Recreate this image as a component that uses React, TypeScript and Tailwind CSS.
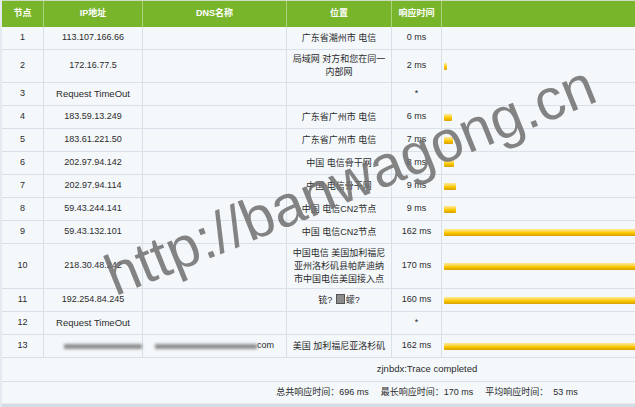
import React from 'react'

type Hop = {
  n: number
  ip: React.ReactNode
  dns?: React.ReactNode
  loc?: React.ReactNode
  ms: string
  bar?: number
  h: string
}

const Box = () => (
  <span className="inline-block w-[9px] h-[10px] mx-[1px] align-[-1px] bg-[#8c8c8c] border border-[#555]" />
)

const HOPS: Hop[] = [
  { n: 1, ip: '113.107.166.66', loc: '广东省潮州市 电信', ms: '0 ms', h: 'h-[23px]' },
  { n: 2, ip: '172.16.77.5', loc: <>局域网 对方和您在同一<br />内部网</>, ms: '2 ms', bar: 2, h: 'h-[33px]' },
  { n: 3, ip: <span className="text-[9.5px]">Request TimeOut</span>, ms: '*', h: 'h-[23px]' },
  { n: 4, ip: '183.59.13.249', loc: '广东省广州市 电信', ms: '6 ms', bar: 6, h: 'h-[23px]' },
  { n: 5, ip: '183.61.221.50', loc: '广东省广州市 电信', ms: '7 ms', bar: 7, h: 'h-[23px]' },
  { n: 6, ip: '202.97.94.142', loc: '中国 电信骨干网', ms: '8 ms', bar: 8, h: 'h-[23px]' },
  { n: 7, ip: '202.97.94.114', loc: '中国 电信骨干网', ms: '9 ms', bar: 9, h: 'h-[23px]' },
  { n: 8, ip: '59.43.244.141', loc: '中国 电信CN2节点', ms: '9 ms', bar: 9, h: 'h-[23px]' },
  { n: 9, ip: '59.43.132.101', loc: '中国 电信CN2节点', ms: '162 ms', bar: 162, h: 'h-[23px]' },
  {
    n: 10,
    ip: '218.30.48.242',
    loc: <>中国电信 美国加利福尼<br />亚州洛杉矶县帕萨迪纳<br />市中国电信美国接入点</>,
    ms: '170 ms',
    bar: 170,
    h: 'h-[45px]',
  },
  { n: 11, ip: '192.254.84.245', loc: <>铳? <Box />蠓?</>, ms: '160 ms', bar: 160, h: 'h-[23px]' },
  { n: 12, ip: <span className="text-[9.5px]">Request TimeOut</span>, ms: '*', h: 'h-[23px]' },
  {
    n: 13,
    ip: <div className="w-full flex justify-end"><div className="h-[5px] w-[78px] bg-[#8d8d8d] blur-[1.5px]" /></div>,
    dns: (
      <div className="w-full flex items-center pl-[12px]">
        <div className="h-[5px] w-[102px] bg-[#8d8d8d] blur-[1.5px]" />
        <span>com</span>
      </div>
    ),
    loc: '美国 加利福尼亚洛杉矶',
    ms: '162 ms',
    bar: 162,
    h: 'h-[23px]',
  },
]

const line = 'border-r border-[#d9e0ea]'

export default function App() {
  return (
    <div
      className="relative w-[635px] h-[407px] overflow-hidden bg-[#f4f8fb] text-[#2b2b2b] text-[9px]"
      style={{ fontFamily: '"Liberation Sans", "Noto Sans CJK SC", sans-serif' }}
    >
      <div className="w-[852px] border-l-2 border-[#e4eaf0]">
        {/* Header */}
        <div className="flex h-[27px] border-t border-[#cfdcc4] bg-[#79b52b] text-white font-bold">
          <div className="w-[42px] shrink-0 flex items-center justify-center border-r border-[#a9d37c]">节点</div>
          <div className="w-[99px] shrink-0 flex items-center justify-center border-r border-[#a9d37c]">IP地址</div>
          <div className="w-[144px] shrink-0 flex items-center justify-center border-r border-[#a9d37c]">DNS名称</div>
          <div className="w-[105px] shrink-0 flex items-center justify-center border-r border-[#a9d37c]">位置</div>
          <div className="w-[50px] shrink-0 flex items-center justify-center border-r border-[#a9d37c]">响应时间</div>
          <div className="flex-1" />
        </div>

        {/* Hops */}
        {HOPS.map(hop => (
          <div key={hop.n} className={`flex ${hop.h} border-b border-[#d9e0ea]`}>
            <div className={`w-[42px] shrink-0 flex items-center justify-center ${line}`}>{hop.n}</div>
            <div className={`w-[99px] shrink-0 flex items-center justify-center ${line}`}>{hop.ip}</div>
            <div className={`w-[144px] shrink-0 flex items-center justify-center ${line}`}>{hop.dns}</div>
            <div className={`w-[105px] shrink-0 flex items-center justify-center text-center leading-[13px] ${line}`}>
              <div>{hop.loc}</div>
            </div>
            <div className={`w-[50px] shrink-0 flex items-center justify-center ${line}`}>{hop.ms}</div>
            <div className="flex-1 flex items-center pl-[2px]">
              {hop.bar ? (
                <div
                  className="h-[7px] rounded-[1px] bg-linear-to-b from-[#ffe98c] via-[#ffcc00] to-[#d6a000]"
                  style={{ width: Math.max(3, Math.round(hop.bar * 1.3)) }}
                />
              ) : null}
            </div>
          </div>
        ))}

        <div className="h-[24px] flex items-center justify-center border-b border-[#d9e0ea] text-[9.5px]">
          zjnbdx:Trace completed
        </div>
        <div className="h-[22px] flex items-center justify-center gap-[12px] border-b border-[#e8edf3]">
          <span>总共响应时间：696 ms</span>
          <span>最长响应时间：170 ms</span>
          <span>平均响应时间：&nbsp;&nbsp;53 ms</span>
        </div>
        <div className="h-[5px] bg-[#d4dce5]" />
      </div>

      {/* Watermark */}
      <div
        className="absolute left-[350px] top-[180px] -translate-x-1/2 -translate-y-1/2 -rotate-[22deg] whitespace-nowrap text-[58px] leading-none text-[#6f6f6f]/85 pointer-events-none"
      >
        http://banwagong.cn
      </div>
    </div>
  )
}
